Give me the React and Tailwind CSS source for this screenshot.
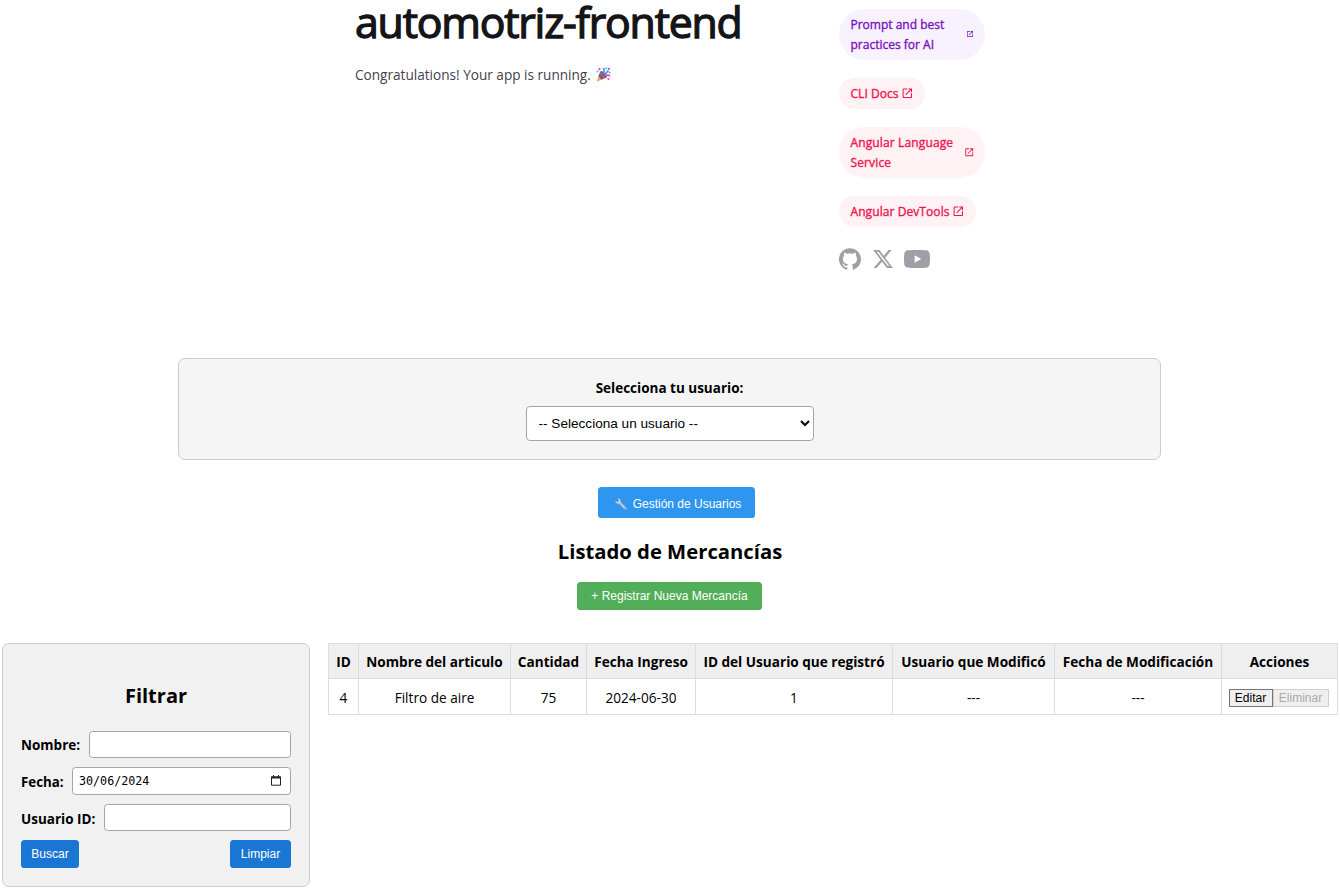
import React from "react";

const OpenIcon = ({ className }) => (
  <svg className={className} viewBox="0 -960 960 960" fill="currentColor">
    <path d="M200-120q-33 0-56.5-23.5T120-200v-560q0-33 23.5-56.5T200-840h280v80H200v560h560v-280h80v280q0 33-23.5 56.5T760-120H200Zm188-212-56-56 372-372H560v-80h280v280h-80v-144L388-332Z" />
  </svg>
);

const Github = () => (
  <svg className="h-[22px] w-[22px]" viewBox="0 0 24.61 24" fill="currentColor">
    <path d="M12.3047 0C5.50634 0 0 5.50942 0 12.3047C0 17.7423 3.52529 22.3535 8.41332 23.9787C9.02856 24.0946 9.25414 23.7142 9.25414 23.3871C9.25414 23.0949 9.24389 22.3207 9.23876 21.2953C5.81601 22.0377 5.09414 19.6444 5.09414 19.6444C4.53427 18.2243 3.72524 17.8449 3.72524 17.8449C2.61064 17.082 3.81137 17.0973 3.81137 17.0973C5.04697 17.1835 5.69604 18.3647 5.69604 18.3647C6.79321 20.2463 8.57636 19.7029 9.27978 19.3881C9.39052 18.5924 9.70736 18.0499 10.0591 17.7423C7.32641 17.4347 4.45429 16.3765 4.45429 11.6618C4.45429 10.3185 4.9311 9.22133 5.72065 8.36C5.58222 8.04931 5.16694 6.79833 5.82831 5.10337C5.82831 5.10337 6.85883 4.77319 9.2121 6.36459C10.1965 6.09082 11.2424 5.95546 12.2883 5.94931C13.3342 5.95546 14.3801 6.09082 15.3644 6.36459C17.7023 4.77319 18.7328 5.10337 18.7328 5.10337C19.3942 6.79833 18.9789 8.04931 18.8559 8.36C19.6403 9.22133 20.1171 10.3185 20.1171 11.6618C20.1171 16.3888 17.2409 17.4296 14.5031 17.7321C14.9338 18.1012 15.3337 18.8559 15.3337 20.0084C15.3337 21.6552 15.3183 22.978 15.3183 23.3779C15.3183 23.7009 15.5336 24.0854 16.1642 23.9623C21.0871 22.3484 24.6094 17.7341 24.6094 12.3047C24.6094 5.50942 19.0999 0 12.3047 0Z" />
  </svg>
);

const XLogo = () => (
  <svg className="h-[22px] w-[22px]" viewBox="0 0 24 24" fill="currentColor">
    <path d="M18.244 2.25h3.308l-7.227 8.26 8.502 11.24H16.17l-5.214-6.817L4.99 21.75H1.68l7.73-8.835L1.254 2.25H8.08l4.713 6.231zm-1.161 17.52h1.833L7.084 4.126H5.117z" />
  </svg>
);

const Youtube = () => (
  <svg className="-ml-[0.6px] h-[18px] w-[26px]" viewBox="0 0 29 20" fill="currentColor">
    <path
      fillRule="evenodd"
      d="M27.4896 1.52422C27.9301 1.96749 28.2463 2.51866 28.4068 3.12258C29 5.35161 29 10 29 10C29 10 29 14.6484 28.4068 16.8774C28.2463 17.4813 27.9301 18.0325 27.4896 18.4758C27.0492 18.9191 26.5 19.2389 25.8972 19.4032C23.6778 20 14.5 20 14.5 20C14.5 20 5.3 20 3.1 19.4032C2.5 19.2389 1.95 18.9191 1.51 18.4758C1.07 18.0325 .75 17.4813 .59 16.8774C0 14.6484 0 10 0 10C0 10 0 5.35161 .59 3.12258C.75 2.51866 1.07 1.96749 1.51 1.52422C1.95 1.08095 2.5 .76 3.1 .6C5.3 0 14.5 0 14.5 0C14.5 0 23.6778 0 25.8972 .6C26.5 .76 27.0492 1.08095 27.4896 1.52422ZM19.3 10L11.8 5.8V14.2L19.3 10Z"
    />
  </svg>
);

const Party = () => (
  <svg className="ml-[5px] h-[15px] w-[15px]" viewBox="0 0 15 15" fill="none">
    <path d="M4.2 4.2 10.8 10.8 .8 14.4Z" fill="#f2a83b" />
    <path d="M3.4 6.6 8.3 11.6 5.6 12.6 2.4 9.3Z" fill="#7a4fb5" />
    <ellipse cx="7.4" cy="7.6" rx="2.1" ry="4.3" transform="rotate(-45 7.4 7.6)" fill="#8b5a86" />
    <path d="M7 6.5C8.5 5 8.6 3.2 7.4 1M8.6 7.6 12.5 3.5" stroke="#3d9be0" strokeWidth="1.6" />
    <path d="M9.4 9C11 7.8 12.8 8 14.2 9.2" stroke="#ec4d9b" strokeWidth="1.6" />
    <g fill="#ec3fa0">
      <circle cx="3.4" cy="2.2" r="1.1" />
      <circle cx="13" cy="1.8" r="1.1" />
      <circle cx="12.4" cy="12" r="1" />
    </g>
    <g fill="#45b5ee">
      <circle cx="10.3" cy="1.5" r="1" />
      <circle cx="13.6" cy="5.6" r="1" />
      <circle cx="1.4" cy="4.3" r=".9" />
    </g>
  </svg>
);

const Wrench = () => (
  <svg className="mr-[6px] h-3 w-3" viewBox="0 0 12 12" fill="none">
    <path d="M4 4 10.3 10.3" stroke="#c9bfdc" strokeWidth="2.4" strokeLinecap="round" />
    <path d="M2.6.5C4.6.2 6 1.8 5.6 3.8L3.8 5.6C1.8 6 .2 4.6.5 2.6L2.2 4 3.8 3.8 4 2.2Z" fill="#d8cfe6" />
    <circle cx="10" cy="10" r=".6" fill="#6e79b5" />
  </svg>
);

const pills = [
  { lines: ["Prompt and best", "practices for AI"], color: "bg-[#f8f2fe] text-[#7a10c0]", tracking: "tracking-[0px]", icon: "h-2 w-2 -mt-px", wide: true },
  { lines: ["CLI Docs"], color: "bg-[#fef2f4] text-[#ee1450]", tracking: "tracking-[0.05px]", icon: "h-[12.6px] w-[12.6px]" },
  { lines: ["Angular Language", "Service"], color: "bg-[#fef2f4] text-[#ee1450]", tracking: "tracking-[0.13px]", icon: "h-[10.5px] w-[10.5px]", wide: true },
  { lines: ["Angular DevTools"], color: "bg-[#fef2f4] text-[#ee1450]", tracking: "tracking-[0.08px]", icon: "h-[12.6px] w-[12.6px]" },
];

const columns = [
  { title: "ID", value: "4", w: "w-[30px]" },
  { title: "Nombre del articulo", value: "Filtro de aire", w: "w-[152px]" },
  { title: "Cantidad", value: "75", w: "w-[76px]" },
  { title: "Fecha Ingreso", value: "2024-06-30", w: "w-[109px]" },
  { title: "ID del Usuario que registró", value: "1", w: "w-[197px]" },
  { title: "Usuario que Modificó", value: "---", w: "w-[162px]" },
  { title: "Fecha de Modificación", value: "---", w: "w-[167px]" },
  { title: "Acciones", value: null, w: "w-[116px]" },
];

const inputBox = "min-w-0 flex-1 rounded-[3.6px] border border-[#a5a5a5] bg-white";
const blueBtn = "h-7 rounded-[3.6px] bg-[#1976d2] font-['Liberation_Sans',Arial,sans-serif] text-[12px] text-white";

export default function App() {
  return (
    <div className="flex h-[890px] w-[1340px] flex-col overflow-hidden bg-white font-['Open_Sans',sans-serif] text-[13.6px] text-black">
      <header className="flex h-[358px] shrink-0 pl-[355px]">
        <div className="w-[484px]">
          <h1 className="h-[45px] whitespace-nowrap text-[42.8px] leading-[43px] tracking-[-1.2px] text-[#151417] [-webkit-text-stroke:1.3px_#151417]">automotriz-frontend</h1>
          <p className="mt-[19px] flex h-[21px] items-center whitespace-nowrap text-[13.6px] leading-[21px] text-[#45424b]">
            <span>Congratulations! Your app is running.</span>
            <Party />
          </p>
        </div>
        <div className="flex w-[146px] flex-col items-start gap-[18px] pt-[9px]">
          {pills.map((p) => (
            <a
              key={p.lines[0]}
              className={`flex items-center rounded-[26px] pr-[11px] pl-[11.5px] py-[5.5px] text-[12px] leading-5 whitespace-nowrap ${p.color} ${p.wide ? "w-full justify-between" : "gap-[2.5px]"}`}
            >
              <span className={`[-webkit-text-stroke:0.35px_currentColor] ${p.tracking}`}>
                {p.lines.map((l) => (
                  <span key={l} className="block">{l}</span>
                ))}
              </span>
              <OpenIcon className={`shrink-0 ${p.icon}`} />
            </a>
          ))}
          <div className="mt-[3px] flex items-center gap-[11px] text-[#a19ea7]">
            <Github />
            <XLogo />
            <Youtube />
          </div>
        </div>
      </header>

      <section className="ml-[178px] flex h-[102px] w-[983px] shrink-0 flex-col items-center rounded-[7px] border border-[#ccc] bg-[#f5f5f5] pt-[19px]">
        <label className="text-[13.5px] font-bold leading-5">Selecciona tu usuario:</label>
        <select className="mt-2 h-[35px] w-[288px] rounded border border-[#a5a5a5] bg-white pr-[7px] pb-px pl-2 font-['Liberation_Sans',Arial,sans-serif] text-[13.6px]">
          <option>-- Selecciona un usuario --</option>
        </select>
      </section>

      <button className="mt-[27px] ml-[598px] flex h-[31px] w-[157px] shrink-0 items-center justify-center rounded-[3.6px] bg-[#2f96f0] pt-[2px] pl-[3px] font-['Liberation_Sans',Arial,sans-serif] text-[12px] text-white">
        <Wrench />
        Gestión de Usuarios
      </button>

      <h2 className="mt-[18px] h-[30px] shrink-0 text-center text-[20.25px] font-bold leading-[30px]">Listado de Mercancías</h2>

      <button className="mt-4 ml-[577px] h-7 w-[185px] shrink-0 rounded-[3.6px] bg-[#52ae58] font-['Liberation_Sans',Arial,sans-serif] text-[12px] text-white">
        + Registrar Nueva Mercancía
      </button>

      <main className="mt-[33px] flex items-start gap-[18px] pl-0.5">
        <aside className="flex h-[244px] w-[308px] shrink-0 flex-col rounded-[7px] border border-[#ccc] bg-[#f1f1f1] px-[18px]">
          <h2 className="mt-9 h-[30px] text-center text-[20px] font-bold leading-[31px]">Filtrar</h2>
          <div className="mt-[21px] flex h-[27px] items-center gap-2">
            <label className="w-[60px] whitespace-nowrap pt-0.5 text-[13.5px] font-bold">Nombre:</label>
            <div className={`h-[27px] ${inputBox}`} />
          </div>
          <div className="mt-[9px] flex h-7 items-center gap-2">
            <label className="w-[43px] whitespace-nowrap pt-1 text-[13.3px] font-bold">Fecha:</label>
            <div className={`flex h-7 items-center justify-between pr-[9px] pl-1.5 ${inputBox}`}>
              <span className="pt-0.5 font-['DejaVu_Sans_Mono',monospace] text-[11.7px]">30/06/2024</span>
              <svg className="-mt-px h-[11px] w-[10px]" viewBox="0 0 10 11">
                <path d="M.5 2h9v8.2h-9z" fill="none" stroke="#222" strokeWidth="1" />
                <path d="M0 1.4h10v2.2H0zM2 0h1v2H2zM7 0h1v2H7z" fill="#222" />
              </svg>
            </div>
          </div>
          <div className="mt-[9px] flex h-[27px] items-center gap-2">
            <label className="w-[75px] whitespace-nowrap pt-[3px] text-[13.5px] font-bold">Usuario ID:</label>
            <div className={`h-[27px] ${inputBox}`} />
          </div>
          <div className="mt-[9px] flex justify-between">
            <button className={`w-[58px] ${blueBtn}`}>Buscar</button>
            <button className={`w-[61px] ${blueBtn}`}>Limpiar</button>
          </div>
        </aside>

        <table className="w-[1010px] shrink-0 table-fixed border-collapse text-center">
          <thead>
            <tr className="h-[35px] bg-[#efefef]">
              {columns.map((c) => (
                <th key={c.title} className={`border border-[#ddd] p-0 pt-[3px] font-bold whitespace-nowrap ${c.w}`}>{c.title}</th>
              ))}
            </tr>
          </thead>
          <tbody>
            <tr className="h-9">
              {columns.map((c) => (
                <td key={c.title} className={`border border-[#ddd] p-0 whitespace-nowrap ${c.value ? "pt-[3px]" : "pt-0.5 pr-0.5"}`}>
                  {c.value ?? (
                    <div className="flex justify-center font-['Liberation_Sans',Arial,sans-serif] text-[12px] leading-4">
                      <button className="h-[18px] w-11 border border-[#767676] bg-[#efefef]">Editar</button>
                      <button className="h-[18px] w-14 border border-[#d0d0d0] bg-[#efefef] text-[#aaa]">Eliminar</button>
                    </div>
                  )}
                </td>
              ))}
            </tr>
          </tbody>
        </table>
      </main>
    </div>
  );
}
